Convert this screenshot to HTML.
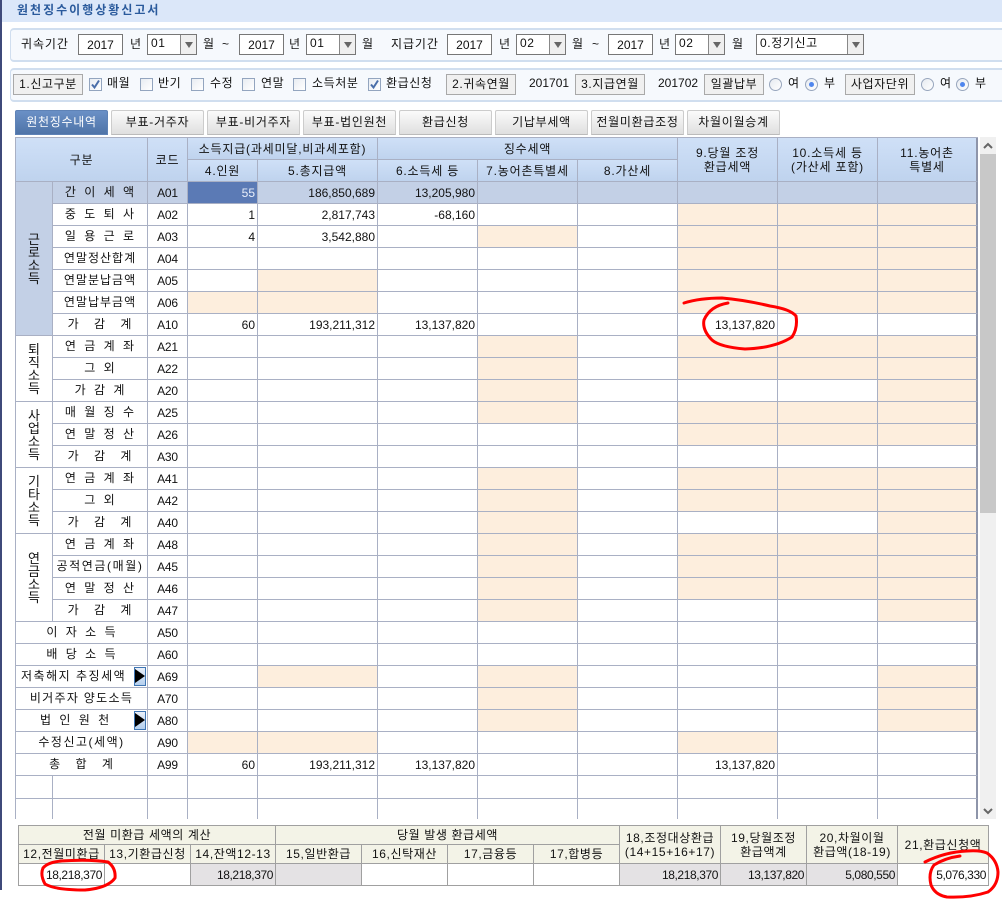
<!DOCTYPE html>
<html lang="ko"><head><meta charset="utf-8"><title>원천징수이행상황신고서</title>
<style>
*{box-sizing:border-box}
html,body{margin:0;padding:0;background:#fff}
body{width:1002px;height:899px;position:relative;overflow:hidden;font:12px/14px "Liberation Sans","WenQuanYi Zen Hei","Noto Sans CJK KR",sans-serif;color:#111}
.a{position:absolute}
.t{position:absolute;white-space:nowrap;line-height:14px;letter-spacing:.6px}
.r1{top:37px}.r2{top:76px}
.panel{position:absolute;left:10px;width:1000px;height:34px;background:#f6f9fd;border:1px solid #d0deef;border-width:2px 1px;border-radius:4px}
.in{position:absolute;top:34px;width:45px;height:21px;border:1px solid #777;background:#fff;text-align:center;line-height:20px}
.sel{position:absolute;top:34px;width:50px;height:21px;border:1px solid #777;background:#fff;line-height:16px;padding-left:3px;letter-spacing:.6px}
.sel i{position:absolute;right:0;top:0;width:16px;height:19px;background:#efefef;border-left:1px solid #888}
.sel i:after{content:"";position:absolute;left:4px;top:7px;border:4px solid transparent;border-top:6px solid #666;border-bottom:0}
.btn{position:absolute;top:74px;height:21px;background:#f0f0f0;border:1px solid #a9a9a9;text-align:center;line-height:18px;letter-spacing:.6px}
.cb{position:absolute;top:78px;width:13px;height:13px;border:1px solid #93a5bf;background:linear-gradient(135deg,#e8ecf2,#fff)}
.cb svg{position:absolute;left:0;top:0}
.ra{position:absolute;top:78px;width:13px;height:13px;border:1px solid #98a6bd;border-radius:50%;background:linear-gradient(135deg,#e6eaf0,#fff)}
.ra.on:after{content:"";position:absolute;left:3px;top:3px;width:5px;height:5px;border-radius:50%;background:#4f86ee}
.tab{position:absolute;top:110px;width:93px;height:25px;border:1px solid #ccc;border-bottom-color:#bbb;background:linear-gradient(#fbfbfb,#dfdfdf);text-align:center;line-height:22px;border-radius:2px 2px 0 0;letter-spacing:.7px}
.tab.on{background:linear-gradient(#6a90c6,#4f74a8);color:#fff;border-color:#5e82b6}
#g{position:absolute;left:15px;top:137px;width:963px;height:682px;overflow:hidden}
#g table{border-collapse:separate;border-spacing:0;table-layout:fixed;width:963px;border-left:1px solid #a9b0c4;border-top:1px solid #a9b0c4}
#g td{height:22px;border-right:1px solid #a9b0c4;border-bottom:1px solid #a9b0c4;padding:0 2px 0 0;text-align:right;white-space:nowrap;overflow:hidden;line-height:14px;background:#fff}
#g tr:not(.nl) td:last-child{border-right:2px solid #8e95aa}
#g td.h{background:linear-gradient(#cfe0f7,#bfd3ee);text-align:center;padding:0;letter-spacing:.8px}
#g td.c{text-align:center;padding:0 0 2px;letter-spacing:1px}
#g td.k{text-align:center;padding:0;letter-spacing:-.2px}
#g td.o{background:#fdeedd}
#g tr.s td{background:#c3d0e6}
#g td.gp{text-align:center;padding:0;line-height:13px;font-size:13px}
#g td.gb{background:#c3d0e6}
#g td.sel55{background:#5b7ab5;color:#e8eefa}
.w3{word-spacing:3px}.w10{word-spacing:10px}
#b{position:absolute;left:18px;top:825px}
#b table{border-collapse:separate;border-spacing:0;table-layout:fixed;width:971px;border-left:1px solid #a0a0a0;border-top:1px solid #a0a0a0}
#b td{border-right:1px solid #a0a0a0;border-bottom:1px solid #a0a0a0;padding:0 2px 0 0;text-align:right;white-space:nowrap;overflow:hidden;background:#fff;line-height:14px;letter-spacing:-.4px}
#b td.h{background:#f3f3e7;text-align:center;padding:0;letter-spacing:.6px}
#b td.e{background:#e4e2e4}
.ab{position:absolute;left:134px;width:12px;height:19px;border:1px solid #3f76b4;background:linear-gradient(#e9f0fa,#b4cfee)}
.ab:after{content:"";position:absolute;left:0;top:1px;border:7px solid transparent;border-left:10px solid #000;border-right:0}
</style></head><body>
<div class="a" style="left:0;top:0;width:2px;height:890px;background:#3f4a7a"></div>
<div class="a" style="left:2px;top:0;width:1000px;height:22px;background:#dbe7f9"></div>
<div class="t" style="left:17px;top:3px;font-weight:bold;color:#2a5a9c;letter-spacing:2px">원천징수이행상황신고서</div>

<div class="panel" style="top:28px"></div>
<div class="panel" style="top:68px"></div>

<span class="t r1" style="left:21px;letter-spacing:.9px">귀속기간</span>
<div class="in" style="left:78px">2017</div><span class="t r1" style="left:130px">년</span>
<div class="sel" style="left:147px">01<i></i></div><span class="t r1" style="left:203px">월</span><span class="t r1" style="left:222px">~</span>
<div class="in" style="left:239px">2017</div><span class="t r1" style="left:289px">년</span>
<div class="sel" style="left:306px">01<i></i></div><span class="t r1" style="left:362px">월</span>
<span class="t r1" style="left:391px;letter-spacing:.9px">지급기간</span>
<div class="in" style="left:447px">2017</div><span class="t r1" style="left:499px">년</span>
<div class="sel" style="left:516px">02<i></i></div><span class="t r1" style="left:572px">월</span><span class="t r1" style="left:592px">~</span>
<div class="in" style="left:608px">2017</div><span class="t r1" style="left:659px">년</span>
<div class="sel" style="left:675px">02<i></i></div><span class="t r1" style="left:732px">월</span>
<div class="sel" style="left:756px;width:108px">0.정기신고<i></i></div>

<div class="btn" style="left:13px;width:70px">1.신고구분</div>
<div class="cb" style="left:89px"><svg width="11" height="11"><path d="M2 5.5L4.5 8.5L9 1.5" fill="none" stroke="#4a6ea9" stroke-width="2"/></svg></div><span class="t r2" style="left:107px">매월</span>
<div class="cb" style="left:140px"></div><span class="t r2" style="left:158px">반기</span>
<div class="cb" style="left:191px"></div><span class="t r2" style="left:210px">수정</span>
<div class="cb" style="left:242px"></div><span class="t r2" style="left:261px">연말</span>
<div class="cb" style="left:293px"></div><span class="t r2" style="left:312px">소득처분</span>
<div class="cb" style="left:368px"><svg width="11" height="11"><path d="M2 5.5L4.5 8.5L9 1.5" fill="none" stroke="#4a6ea9" stroke-width="2"/></svg></div><span class="t r2" style="left:386px">환급신청</span>
<div class="btn" style="left:446px;width:70px">2.귀속연월</div><span class="t r2" style="left:529px;letter-spacing:0">201701</span>
<div class="btn" style="left:575px;width:70px">3.지급연월</div><span class="t r2" style="left:658px;letter-spacing:0">201702</span>
<div class="btn" style="left:704px;width:60px">일괄납부</div>
<div class="ra" style="left:769px"></div><span class="t r2" style="left:788px">여</span>
<div class="ra on" style="left:805px"></div><span class="t r2" style="left:824px">부</span>
<div class="btn" style="left:845px;width:70px">사업자단위</div>
<div class="ra" style="left:921px"></div><span class="t r2" style="left:940px">여</span>
<div class="ra on" style="left:956px"></div><span class="t r2" style="left:975px">부</span>

<div class="tab on" style="left:15px">원천징수내역</div>
<div class="tab" style="left:111px">부표-거주자</div>
<div class="tab" style="left:207px">부표-비거주자</div>
<div class="tab" style="left:303px">부표-법인원천</div>
<div class="tab" style="left:399px">환급신청</div>
<div class="tab" style="left:495px">기납부세액</div>
<div class="tab" style="left:591px">전월미환급조정</div>
<div class="tab" style="left:687px">차월이월승계</div>

<div id="g"><table>
<colgroup><col style="width:37px"><col style="width:95px"><col style="width:40px"><col style="width:70px"><col style="width:120px"><col style="width:100px"><col style="width:100px"><col style="width:100px"><col style="width:100px"><col style="width:100px"><col style="width:100px"></colgroup>
<tr><td class="h" colspan="2" rowspan="2">구분</td><td class="h" rowspan="2">코드</td><td class="h" colspan="2">소득지급(과세미달,비과세포함)</td><td class="h" colspan="3">징수세액</td><td class="h" rowspan="2">9.당월 조정<br>환급세액</td><td class="h" rowspan="2">10.소득세 등<br>(가산세 포함)</td><td class="h" rowspan="2">11.농어촌<br>특별세</td></tr>
<tr class="nl"><td class="h">4.인원</td><td class="h">5.총지급액</td><td class="h">6.소득세 등</td><td class="h">7.농어촌특별세</td><td class="h">8.가산세</td></tr>
<tr class="s"><td class="gp gb" rowspan="7">근<br>로<br>소<br>득</td><td class="c w3">간 이 세 액</td><td class="k">A01</td><td class="sel55" style="background:#5b7ab5">55</td><td>186,850,689</td><td>13,205,980</td><td></td><td></td><td></td><td></td><td></td></tr>
<tr><td class="c w3">중 도 퇴 사</td><td class="k">A02</td><td>1</td><td>2,817,743</td><td>-68,160</td><td></td><td></td><td class="o"></td><td class="o"></td><td class="o"></td></tr>
<tr><td class="c w3">일 용 근 로</td><td class="k">A03</td><td>4</td><td>3,542,880</td><td></td><td class="o"></td><td></td><td class="o"></td><td class="o"></td><td class="o"></td></tr>
<tr><td class="c">연말정산합계</td><td class="k">A04</td><td></td><td></td><td></td><td></td><td></td><td class="o"></td><td class="o"></td><td class="o"></td></tr>
<tr><td class="c">연말분납금액</td><td class="k">A05</td><td></td><td class="o"></td><td></td><td></td><td></td><td class="o"></td><td class="o"></td><td class="o"></td></tr>
<tr><td class="c">연말납부금액</td><td class="k">A06</td><td class="o"></td><td class="o"></td><td></td><td></td><td></td><td class="o"></td><td class="o"></td><td class="o"></td></tr>
<tr><td class="c w10">가 감 계</td><td class="k">A10</td><td>60</td><td>193,211,312</td><td>13,137,820</td><td></td><td></td><td>13,137,820</td><td></td><td></td></tr>
<tr><td class="gp" rowspan="3">퇴<br>직<br>소<br>득</td><td class="c w3">연 금 계 좌</td><td class="k">A21</td><td></td><td></td><td></td><td class="o"></td><td></td><td class="o"></td><td class="o"></td><td class="o"></td></tr>
<tr><td class="c w3">그 외</td><td class="k">A22</td><td></td><td></td><td></td><td class="o"></td><td></td><td class="o"></td><td class="o"></td><td class="o"></td></tr>
<tr><td class="c w3">가 감 계</td><td class="k">A20</td><td></td><td></td><td></td><td class="o"></td><td></td><td></td><td></td><td class="o"></td></tr>
<tr><td class="gp" rowspan="3">사<br>업<br>소<br>득</td><td class="c w3">매 월 징 수</td><td class="k">A25</td><td></td><td></td><td></td><td class="o"></td><td></td><td class="o"></td><td class="o"></td><td class="o"></td></tr>
<tr><td class="c w3">연 말 정 산</td><td class="k">A26</td><td></td><td></td><td></td><td></td><td></td><td class="o"></td><td class="o"></td><td class="o"></td></tr>
<tr><td class="c w10">가 감 계</td><td class="k">A30</td><td></td><td></td><td></td><td></td><td></td><td></td><td></td><td></td></tr>
<tr><td class="gp" rowspan="3">기<br>타<br>소<br>득</td><td class="c w3">연 금 계 좌</td><td class="k">A41</td><td></td><td></td><td></td><td class="o"></td><td></td><td class="o"></td><td class="o"></td><td class="o"></td></tr>
<tr><td class="c w3">그 외</td><td class="k">A42</td><td></td><td></td><td></td><td class="o"></td><td></td><td class="o"></td><td class="o"></td><td class="o"></td></tr>
<tr><td class="c w10">가 감 계</td><td class="k">A40</td><td></td><td></td><td></td><td class="o"></td><td></td><td></td><td></td><td class="o"></td></tr>
<tr><td class="gp" rowspan="4">연<br>금<br>소<br>득</td><td class="c w3">연 금 계 좌</td><td class="k">A48</td><td></td><td></td><td></td><td class="o"></td><td></td><td class="o"></td><td class="o"></td><td class="o"></td></tr>
<tr><td class="c" style="letter-spacing:1.6px">공적연금(매월)</td><td class="k">A45</td><td></td><td></td><td></td><td class="o"></td><td></td><td class="o"></td><td class="o"></td><td class="o"></td></tr>
<tr><td class="c w3">연 말 정 산</td><td class="k">A46</td><td></td><td></td><td></td><td class="o"></td><td></td><td class="o"></td><td class="o"></td><td class="o"></td></tr>
<tr><td class="c w10">가 감 계</td><td class="k">A47</td><td></td><td></td><td></td><td class="o"></td><td></td><td></td><td></td><td class="o"></td></tr>
<tr><td class="c w3" colspan="2">이 자 소 득</td><td class="k">A50</td><td></td><td></td><td></td><td></td><td></td><td></td><td></td><td></td></tr>
<tr><td class="c w3" colspan="2">배 당 소 득</td><td class="k">A60</td><td></td><td></td><td></td><td></td><td></td><td></td><td></td><td></td></tr>
<tr><td class="c" colspan="2" style="text-align:left;padding-left:5px;letter-spacing:1.5px">저축해지 추징세액</td><td class="k">A69</td><td></td><td class="o"></td><td></td><td class="o"></td><td></td><td></td><td></td><td class="o"></td></tr>
<tr><td class="c" colspan="2" style="letter-spacing:1.3px">비거주자 양도소득</td><td class="k">A70</td><td></td><td></td><td></td><td class="o"></td><td></td><td></td><td></td><td class="o"></td></tr>
<tr><td class="c w3" colspan="2" style="text-align:left;padding-left:24px">법 인 원 천</td><td class="k">A80</td><td></td><td></td><td></td><td class="o"></td><td></td><td></td><td></td><td class="o"></td></tr>
<tr><td class="c" colspan="2" style="letter-spacing:1.5px">수정신고(세액)</td><td class="k">A90</td><td class="o"></td><td class="o"></td><td></td><td></td><td></td><td class="o"></td><td></td><td></td></tr>
<tr><td class="c w10" colspan="2">총 합 계</td><td class="k">A99</td><td>60</td><td>193,211,312</td><td>13,137,820</td><td></td><td></td><td>13,137,820</td><td></td><td></td></tr>
<tr style="height:23px"><td style="height:23px"></td><td style="height:23px"></td><td></td><td></td><td></td><td></td><td></td><td></td><td></td><td></td><td></td></tr>
<tr><td></td><td></td><td></td><td></td><td></td><td></td><td></td><td></td><td></td><td></td><td></td></tr>
</table></div>
<div class="ab" style="top:667px"></div>
<div class="ab" style="top:711px"></div>

<div class="a" style="left:980px;top:137px;width:16px;height:682px;background:#f0f0f0"></div>
<div class="a" style="left:980px;top:154px;width:16px;height:359px;background:#c8c8c8"></div>
<svg class="a" style="left:980px;top:137px" width="16" height="682"><path d="M4 11L8 7L12 11" fill="none" stroke="#666" stroke-width="2"/><path d="M4 672L8 676L12 672" fill="none" stroke="#666" stroke-width="2"/></svg>

<div id="b"><table>
<colgroup><col style="width:86px"><col style="width:86px"><col style="width:85px"><col style="width:86px"><col style="width:86px"><col style="width:86px"><col style="width:86px"><col style="width:101px"><col style="width:86px"><col style="width:91px"><col style="width:91px"></colgroup>
<tr style="height:19px"><td class="h" colspan="3">전월 미환급 세액의 계산</td><td class="h" colspan="4">당월 발생 환급세액</td><td class="h" rowspan="2">18,조정대상환급<br>(14+15+16+17)</td><td class="h" rowspan="2">19,당월조정<br>환급액계</td><td class="h" rowspan="2">20,차월이월<br>환급액(18-19)</td><td class="h" rowspan="2">21,환급신청액</td></tr>
<tr style="height:19px"><td class="h">12,전월미환급</td><td class="h">13,기환급신청</td><td class="h">14,잔액12-13</td><td class="h">15,일반환급</td><td class="h">16,신탁재산</td><td class="h">17,금융등</td><td class="h">17,합병등</td></tr>
<tr style="height:22px"><td>18,218,370</td><td></td><td class="e">18,218,370</td><td class="e"></td><td></td><td></td><td></td><td class="e">18,218,370</td><td class="e">13,137,820</td><td class="e">5,080,550</td><td>5,076,330</td></tr>
</table></div>

<svg class="a" style="left:0;top:0" width="1002" height="899" fill="none" stroke="#f00" stroke-width="3" stroke-linecap="round" stroke-linejoin="round">
<path d="M684 303Q700 298 722 298Q745 300 770 306Q790 309 796 316Q798 328 792 337Q775 348 745 349Q720 347 712 340Q702 330 704 320Q710 306 728 303"/>
<path d="M60 861Q90 859 108 862Q116 868 115 878Q108 888 85 890Q55 890 45 884Q40 875 43 868Q48 862 62 861"/>
<path d="M925 862Q945 852 967 851Q980 850 987 853Q997 860 998 872Q998 885 988 892Q970 898 947 897Q935 895 931 885Q928 873 934 865Q945 858 960 856"/>
</svg>
</body></html>
